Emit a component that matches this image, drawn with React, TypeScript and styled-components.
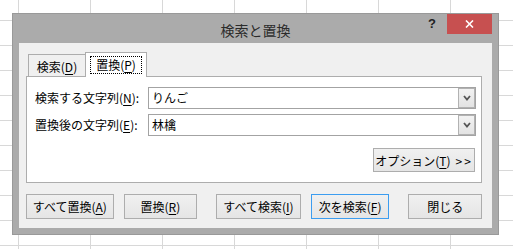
import React from 'react';
import styled, { createGlobalStyle } from 'styled-components';

const Global = createGlobalStyle`
  html, body {
    margin: 0;
    padding: 0;
  }
  body {
    width: 513px;
    height: 249px;
    overflow: hidden;
    background-color: #fff;
    background-image:
      linear-gradient(to right, #d8d8d8 1px, transparent 1px),
      linear-gradient(to bottom, #d8d8d8 1px, transparent 1px);
    background-size: 72px 100%, 100% 25px;
    background-position: 18px 0, 0 20px;
    font-family: "Noto Sans CJK JP", "Noto Sans", sans-serif;
    font-size: 12px;
    color: #000;
  }
`;

const Page = styled.div`
  padding: 13px 0 0 12px;
`;

const Window = styled.div`
  width: 487px;
  height: 222px;
  box-sizing: border-box;
  background: #ababab;
  border: 1px solid #999;
  padding: 0 6px 6px;
  display: flex;
  flex-direction: column;
`;

const TitleBar = styled.div`
  height: 29px;
  display: grid;
  grid-template-columns: 1fr auto 1fr;
`;

const Title = styled.div`
  grid-column: 2;
  font-size: 14px;
  line-height: 32px;
  color: #2b2b2b;
`;

const Controls = styled.div`
  grid-column: 3;
  display: flex;
  justify-content: flex-end;
  align-items: flex-start;
`;

const Help = styled.div`
  font-family: "Liberation Sans", sans-serif;
  font-weight: bold;
  font-size: 13px;
  line-height: 20px;
  color: #222;
  margin-right: 11px;
`;

const CloseBox = styled.div`
  width: 45px;
  height: 20px;
  background: #c75050;
  display: flex;
  align-items: center;
  justify-content: center;
`;

const Client = styled.div`
  flex: 1;
  background: #f0f0f0;
  padding: 9px 10px 9px 7px;
  display: flex;
  flex-direction: column;
`;

const TabStrip = styled.div`
  height: 24px;
  display: flex;
  align-items: flex-end;
  padding-left: 2px;
  position: relative;
  z-index: 1;
`;

const Tab = styled.div<{ $active?: boolean; $w: number }>`
  box-sizing: border-box;
  width: ${p => p.$w}px;
  height: ${p => (p.$active ? 25 : 22)}px;
  margin-bottom: ${p => (p.$active ? -1 : 0)}px;
  background: ${p => (p.$active ? '#fff' : '#f0f0f0')};
  border: 1px solid #adadad;
  border-bottom: none;
  ${p => (p.$active ? '' : 'border-right: none;')}
  display: flex;
  align-items: center;
  justify-content: center;
  padding-top: ${p => (p.$active ? 0 : 1)}px;
`;

const FocusLabel = styled.span`
  outline: 1px dotted #000;
  outline-offset: 0;
  padding: 0 5px;
  line-height: 16px;
`;

const Panel = styled.div`
  height: 107px;
  box-sizing: border-box;
  background: #fff;
  border: 1px solid #adadad;
  padding: 10px 5px 0 8px;
  display: flex;
  flex-direction: column;
`;

const FieldGrid = styled.div`
  display: grid;
  grid-template-columns: 113px 1fr;
  row-gap: 5px;
  align-items: center;
`;

const Label = styled.div`
  line-height: 22px;
`;

const Combo = styled.div`
  height: 22px;
  box-sizing: border-box;
  border: 1px solid #a3a3a3;
  background: #fff;
  display: flex;
`;

const ComboText = styled.div`
  flex: 1;
  padding-left: 3px;
  line-height: 20px;
`;

const DropButton = styled.div`
  width: 17px;
  box-sizing: border-box;
  border: 1px solid #b2b2b2;
  background: linear-gradient(#f2f2f2, #e3e3e3);
  display: flex;
  align-items: center;
  justify-content: center;
`;

const OptionRow = styled.div`
  display: flex;
  justify-content: flex-end;
  margin-top: 12px;
  padding-right: 1px;
`;

const Button = styled.button<{ $w: number; $h?: number; $gap?: number; $default?: boolean }>`
  width: ${p => p.$w}px;
  height: ${p => p.$h ?? 25}px;
  margin-left: ${p => p.$gap ?? 0}px;
  box-sizing: border-box;
  border: 1px solid ${p => (p.$default ? '#3c9df0' : '#adadad')};
  background: linear-gradient(#f0f0f0, #e5e5e5);
  font-family: inherit;
  font-size: 12px;
  color: #000;
  padding: 0;
  display: flex;
  align-items: center;
  justify-content: center;
  white-space: nowrap;
`;

const ButtonRow = styled.div`
  display: flex;
  margin-top: 11px;
`;

const Key = styled.span`
  text-decoration: underline;
  text-underline-offset: 2px;
`;

const Arrows = styled.span`
  margin-left: 5px;
  letter-spacing: 2px;
`;

function Chevron() {
  return (
    <svg width="8" height="6" viewBox="0 0 8 6">
      <polyline points="1,1 4,4.5 7,1" fill="none" stroke="#555" strokeWidth="1.8" />
    </svg>
  );
}

function CloseIcon() {
  return (
    <svg width="9" height="8" viewBox="0 0 9 8">
      <path d="M1 0.5 L8 7.5 M8 0.5 L1 7.5" stroke="#fff" strokeWidth="1.6" />
    </svg>
  );
}

export default function App() {
  return (
    <>
      <Global />
      <Page>
        <Window>
          <TitleBar>
            <Title>検索と置換</Title>
            <Controls>
              <Help>?</Help>
              <CloseBox>
                <CloseIcon />
              </CloseBox>
            </Controls>
          </TitleBar>
          <Client>
            <TabStrip>
              <Tab $w={57}>
                検索(<Key>D</Key>)
              </Tab>
              <Tab $active $w={62}>
                <FocusLabel>
                  置換(<Key>P</Key>)
                </FocusLabel>
              </Tab>
            </TabStrip>
            <Panel>
              <FieldGrid>
                <Label>
                  検索する文字列(<Key>N</Key>):
                </Label>
                <Combo>
                  <ComboText>りんご</ComboText>
                  <DropButton>
                    <Chevron />
                  </DropButton>
                </Combo>
                <Label>
                  置換後の文字列(<Key>E</Key>):
                </Label>
                <Combo>
                  <ComboText>林檎</ComboText>
                  <DropButton>
                    <Chevron />
                  </DropButton>
                </Combo>
              </FieldGrid>
              <OptionRow>
                <Button $w={102} $h={24}>
                  オプション(<Key>T</Key>)<Arrows>&gt;&gt;</Arrows>
                </Button>
              </OptionRow>
            </Panel>
            <ButtonRow>
              <Button $w={88}>
                すべて置換(<Key>A</Key>)
              </Button>
              <Button $w={74} $gap={10}>
                置換(<Key>R</Key>)
              </Button>
              <Button $w={85} $gap={19}>
                すべて検索(<Key>I</Key>)
              </Button>
              <Button $w={79} $gap={10} $default>
                次を検索(<Key>F</Key>)
              </Button>
              <Button $w={74} $gap={19}>
                閉じる
              </Button>
            </ButtonRow>
          </Client>
        </Window>
      </Page>
    </>
  );
}
